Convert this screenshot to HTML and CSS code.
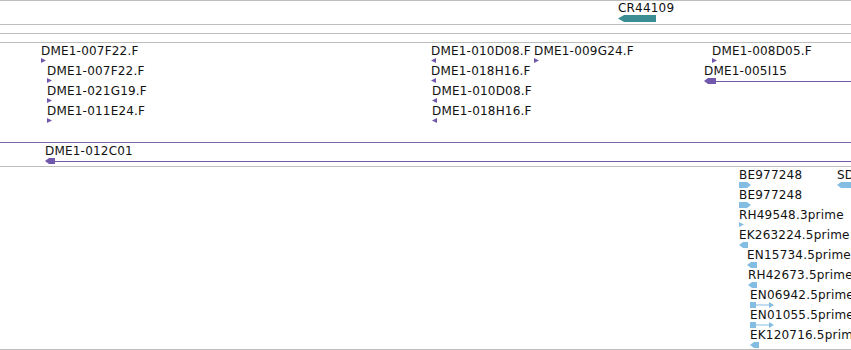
FILE: index.html
```html
<!DOCTYPE html>
<html>
<head>
    <title>Tracks</title>
    <link rel="stylesheet" href="styles.css">
</head>
<body>
    <div class="panel">
        <!-- gene track -->
        <div class="track track-gene">
            <div class="feat" style="left:618px;top:0px">
                <span class="lbl">CR44109</span>
                <svg class="g" width="38" height="7"><polygon class="teal" points="0,3.5 6,0 38,0 38,7 6,7"/></svg>
            </div>
        </div>
        <div class="track track-empty"></div>
        <div class="track track-empty"></div>

        <!-- clone ends -->
        <div class="track track-clones">
            <div class="feat" style="left:41px;top:1px">
                <span class="lbl">DME1-007F22.F</span>
                <svg class="g" width="5" height="5"><polygon class="purple" points="0,0 5,2.5 0,5"/></svg>
            </div>
            <div class="feat" style="left:47px;top:21px">
                <span class="lbl">DME1-007F22.F</span>
                <svg class="g" width="5" height="5"><polygon class="purple" points="0,0 5,2.5 0,5"/></svg>
            </div>
            <div class="feat" style="left:47px;top:41px">
                <span class="lbl">DME1-021G19.F</span>
                <svg class="g" width="5" height="5"><polygon class="purple" points="0,0 5,2.5 0,5"/></svg>
            </div>
            <div class="feat" style="left:47px;top:61px">
                <span class="lbl">DME1-011E24.F</span>
                <svg class="g" width="5" height="5"><polygon class="purple" points="0,0 5,2.5 0,5"/></svg>
            </div>

            <div class="feat" style="left:431px;top:1px">
                <span class="lbl">DME1-010D08.F</span>
                <svg class="g" width="5" height="5"><polygon class="purple" points="5,0 0,2.5 5,5"/></svg>
            </div>
            <div class="feat" style="left:534px;top:1px">
                <span class="lbl">DME1-009G24.F</span>
                <svg class="g" width="5" height="5"><polygon class="purple" points="0,0 5,2.5 0,5"/></svg>
            </div>
            <div class="feat" style="left:431px;top:21px">
                <span class="lbl">DME1-018H16.F</span>
                <svg class="g" width="5" height="5"><polygon class="purple" points="5,0 0,2.5 5,5"/></svg>
            </div>
            <div class="feat" style="left:432px;top:41px">
                <span class="lbl">DME1-010D08.F</span>
                <svg class="g" width="5" height="5"><polygon class="purple" points="5,0 0,2.5 5,5"/></svg>
            </div>
            <div class="feat" style="left:432px;top:61px">
                <span class="lbl">DME1-018H16.F</span>
                <svg class="g" width="5" height="5"><polygon class="purple" points="5,0 0,2.5 5,5"/></svg>
            </div>

            <div class="feat" style="left:712px;top:1px">
                <span class="lbl">DME1-008D05.F</span>
                <svg class="g" width="5" height="5"><polygon class="purple" points="0,0 5,2.5 0,5"/></svg>
            </div>
            <div class="feat feat-long" style="left:704px;top:21px">
                <span class="lbl">DME1-005I15</span>
                <div class="span-row">
                    <svg class="g" width="12" height="6"><polygon class="purple" points="0,3 4,0 12,0 12,6 4,6"/></svg>
                    <div class="stem stem-purple"></div>
                </div>
            </div>
        </div>

        <!-- BAC -->
        <div class="track track-bac">
            <div class="feat feat-long" style="left:45px;top:1px">
                <span class="lbl">DME1-012C01</span>
                <div class="span-row">
                    <svg class="g" width="10" height="6"><polygon class="purple" points="0,3 4,0 10,0 10,6 4,6"/></svg>
                    <div class="stem stem-purple"></div>
                </div>
            </div>
        </div>

        <!-- ESTs -->
        <div class="track track-est">
            <div class="feat" style="left:739px;top:1px">
                <span class="lbl">BE977248</span>
                <svg class="g" width="12" height="6"><polygon class="blue" points="0,0 8,0 12,3 8,6 0,6"/></svg>
            </div>
            <div class="feat" style="left:837px;top:1px">
                <span class="lbl">SD</span>
                <svg class="g" width="20" height="6"><polygon class="blue" points="0,3 4,0 20,0 20,6 4,6"/></svg>
            </div>
            <div class="feat" style="left:739px;top:21px">
                <span class="lbl">BE977248</span>
                <svg class="g" width="12" height="6"><polygon class="blue" points="0,0 8,0 12,3 8,6 0,6"/></svg>
            </div>
            <div class="feat" style="left:739px;top:41px">
                <span class="lbl">RH49548.3prime</span>
                <svg class="g" width="5" height="5"><polygon class="blue" points="0,0 5,2.5 0,5"/></svg>
            </div>
            <div class="feat" style="left:739px;top:61px">
                <span class="lbl">EK263224.5prime</span>
                <svg class="g" width="9" height="6"><polygon class="blue" points="0,3 4,0 9,0 9,6 4,6"/></svg>
            </div>
            <div class="feat" style="left:747px;top:81px">
                <span class="lbl">EN15734.5prime</span>
                <svg class="g" width="10" height="6"><polygon class="blue" points="0,3 4,0 10,0 10,6 4,6"/></svg>
            </div>
            <div class="feat" style="left:748px;top:101px">
                <span class="lbl">RH42673.5prime</span>
                <svg class="g" width="9" height="6"><polygon class="blue" points="0,3 4,0 9,0 9,6 4,6"/></svg>
            </div>
            <div class="feat" style="left:750px;top:121px">
                <span class="lbl">EN06942.5prime</span>
                <svg class="g" width="24" height="6"><polygon class="blue" points="0,0 6,0 6,2.5 19,2.5 19,0 24,3 19,6 19,3.5 6,3.5 6,6 0,6"/></svg>
            </div>
            <div class="feat" style="left:750px;top:141px">
                <span class="lbl">EN01055.5prime</span>
                <svg class="g" width="24" height="6"><polygon class="blue" points="0,0 6,0 6,2.5 19,2.5 19,0 24,3 19,6 19,3.5 6,3.5 6,6 0,6"/></svg>
            </div>
            <div class="feat" style="left:750px;top:161px">
                <span class="lbl">EK120716.5prime</span>
                <svg class="g" width="9" height="6"><polygon class="blue" points="0,3 4,0 9,0 9,6 4,6"/></svg>
            </div>
        </div>
    </div>
</body>
</html>
```

FILE: styles.css
```css
body {
    margin: 0;
    background-color: #fff;
    font-family: 'DejaVu Sans', 'Liberation Sans', sans-serif;
    color: #111;
}

.panel {
    width: 851px;
    overflow: hidden;
}

.track {
    position: relative;
    overflow: hidden;
    border-top: 1px solid #bdbdbd;
}

.track-gene {
    height: 23px;
}

.track-empty {
    height: 8px;
}

.track-clones {
    height: 99px;
}

.track-bac {
    height: 23px;
    border-top-color: #7a68a8;
}

.track-est {
    height: 182px;
    border-bottom: 1px solid #bdbdbd;
}

.feat {
    position: absolute;
    white-space: nowrap;
}

.feat-long {
    right: 0;
}

.lbl {
    display: block;
    font-size: 12px;
    line-height: 14px;
    height: 14px;
    letter-spacing: 0.2px;
}

.g {
    display: block;
}

.span-row {
    display: flex;
    align-items: center;
}

.stem {
    flex: 1;
    height: 1px;
}

.stem-purple {
    background-color: #6f5aa6;
}

.purple {
    fill: #7158ad;
}

.teal {
    fill: #3a8e93;
}

.blue {
    fill: #84bde2;
}
```
